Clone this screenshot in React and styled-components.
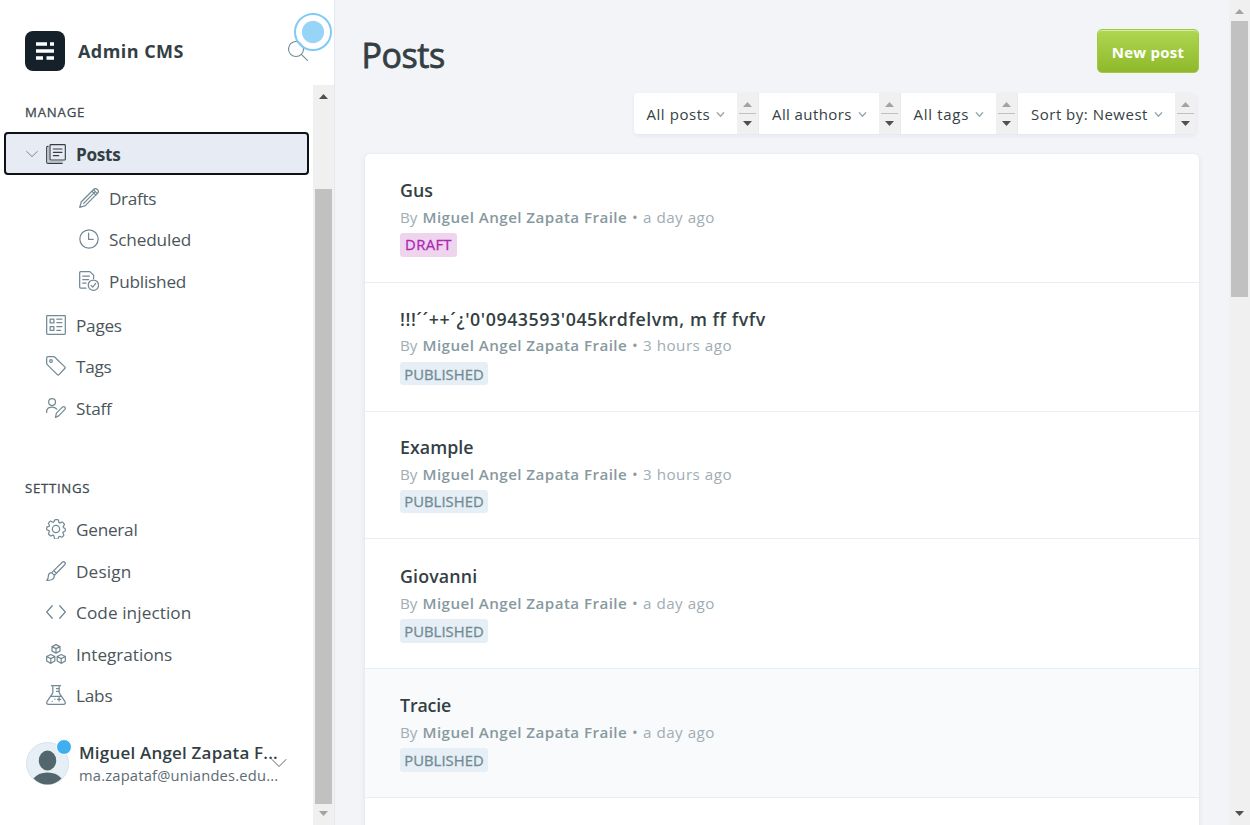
import React from 'react';
import styled, { createGlobalStyle, css } from 'styled-components';

const Global = createGlobalStyle`
  * { box-sizing: border-box; }
  html, body { margin: 0; padding: 0; height: 100%; overflow: hidden; }
  body { font-family: "Open Sans", "Noto Sans", sans-serif; color: #394047; background: #f2f4f8; }
  h1, h2, h3, p { margin: 0; font-weight: inherit; }
`;

const Page = styled.div`
  display: grid;
  grid-template-columns: 335px 1fr 21px;
  width: 1250px;
  height: 825px;
  overflow: hidden;
`;

const Sidebar = styled.aside`
  position: relative;
  display: flex;
  flex-direction: column;
  background: #fff;
  border-right: 1px solid #e5e9ef;
  min-width: 0;
`;

const Brand = styled.header`
  display: flex;
  align-items: center;
  height: 85px;
  padding: 17px 26px 0 25px;
  flex: none;
`;

const BrandName = styled.span`
  flex: 1;
  margin-left: 13px;
  font-size: 18px;
  font-weight: 700;
  line-height: 24px;
  letter-spacing: 0.45px;
  color: #343f44;
`;

const Pulse = styled.div`
  position: absolute;
  left: 294px;
  top: 13px;
  width: 38px;
  height: 38px;
  border-radius: 50%;
  border: 2px solid #80cbf6;
  background: radial-gradient(circle, #98d3f8 0 10.6px, rgba(255, 255, 255, 0.6) 11.6px);
`;

const Glyph = styled.svg`
  display: block;
  flex: none;
  width: ${(p) => p.$size || 20}px;
  height: ${(p) => p.$size || 20}px;
  fill: none;
  stroke: ${(p) => p.$color || '#738a94'};
  stroke-width: ${(p) => p.$weight || 1.5};
  stroke-linecap: round;
  stroke-linejoin: round;
`;

const SideBody = styled.div`
  display: flex;
  flex: 1;
  min-height: 0;
`;

const Nav = styled.nav`
  display: flex;
  flex-direction: column;
  width: 313px;
  flex: none;
`;

const Heading = styled.h3`
  height: 20px;
  margin: ${(p) => p.$top}px 0 0 25px;
  font-size: 13.2px;
  line-height: 20px;
  font-weight: 400;
  -webkit-text-stroke: 0.3px currentColor;
  letter-spacing: ${(p) => p.$ls}px;
  color: #404b51;
`;

const Item = styled.a`
  display: flex;
  align-items: center;
  height: 40px;
  padding-left: ${(p) => (p.$sub ? 79 : 46)}px;
  margin-top: ${(p) => p.$top || 0}px;
  font-size: 17.2px;
  font-weight: ${(p) => (p.$active ? 700 : 400)};
  color: ${(p) => (p.$active ? '#343f44' : '#4b565b')};
  letter-spacing: ${(p) => p.$ls || 0}px;
  ${(p) =>
    p.$active &&
    css`
      margin: 10px 4px 0 4px;
      height: 43px;
      padding: 0 0 0 20px;
      border: 2px solid #101114;
      border-radius: 4px;
      background: #e6ebf4;
    `}
`;

const Label = styled.span`
  margin-left: 10px;
  padding-top: 2px;
  line-height: 24px;
  white-space: nowrap;
`;

const Caret = styled(Glyph)`
  width: 12px;
  height: 8px;
  margin-right: 8px;
`;

const User = styled.div`
  display: flex;
  align-items: flex-start;
  margin: 27px 0 0 26px;
  height: 44px;
`;

const Avatar = styled.div`
  position: relative;
  width: 43px;
  height: 43px;
  flex: none;
`;

const Online = styled.i`
  position: absolute;
  left: 30px;
  top: -3px;
  width: 16px;
  height: 16px;
  border-radius: 50%;
  background: #3eb0ef;
  border: 1px solid #fff;
`;

const UserText = styled.div`
  margin: -1px 0 0 10px;
  width: 200px;
  white-space: nowrap;
`;

const UserName = styled.div`
  margin-bottom: 1px;
  font-size: 17px;
  line-height: 23px;
  font-weight: 600;
  letter-spacing: ${(p) => p.$ls}px;
  color: #343f44;
`;

const UserMail = styled.div`
  font-size: 14.7px;
  line-height: 21px;
  letter-spacing: ${(p) => p.$ls}px;
  color: #5d6b72;
`;

const UserCaret = styled(Glyph)`
  width: 18px;
  height: 10px;
  margin: 16px 0 0 -9px;
`;

const Bar = styled.div`
  display: flex;
  flex-direction: column;
  align-items: center;
  width: 21px;
  flex: none;
  background: #f0f0f0;
`;

const BarEnd = styled.div`
  display: flex;
  align-items: center;
  justify-content: center;
  flex: none;
  height: ${(p) => p.$h}px;
  padding-top: ${(p) => p.$pad || 0}px;
`;

const BarThumb = styled.div`
  width: 17px;
  height: ${(p) => p.$h}px;
  margin-top: ${(p) => p.$top || 0}px;
  background: #c1c1c1;
`;

const Spacer = styled.div`
  flex: 1;
`;

const Arrow = styled.i`
  display: block;
  flex: none;
  width: 9px;
  height: 5px;
  background: ${(p) => (p.$muted ? '#a3a3a3' : '#505050')};
  clip-path: ${(p) => (p.$down ? 'polygon(0 0, 100% 0, 50% 100%)' : 'polygon(50% 0, 100% 100%, 0 100%)')};
`;

const Main = styled.main`
  display: flex;
  flex-direction: column;
  padding: 29px 30px 0 30px;
  min-width: 0;
  overflow: hidden;
`;

const TitleRow = styled.div`
  display: flex;
  justify-content: space-between;
  height: 64px;
  flex: none;
`;

const Title = styled.h1`
  margin: 4px 0 0 -3.5px;
  font-size: 34px;
  line-height: 44px;
  font-weight: 400;
  -webkit-text-stroke: 0.8px currentColor;
  letter-spacing: ${(p) => p.$ls}px;
  color: #343f44;
`;

const NewPost = styled.button`
  width: 102px;
  height: 44px;
  padding: 2px 0 0 0;
  border: 1px solid #9fcb3c;
  border-radius: 5px;
  box-shadow: inset 0 1px 0 #d3ebaa;
  background: linear-gradient(#afd751, #8fb92b);
  font: 700 15px/20px "Open Sans", sans-serif;
  letter-spacing: ${(p) => p.$ls}px;
  color: #fff;
`;

const Filters = styled.div`
  display: flex;
  align-self: flex-end;
  height: 41px;
  flex: none;
  margin-right: 3px;
  border-radius: 4px;
  overflow: hidden;
  background: #e9eaee;
  gap: 1px;
  box-shadow: 0 0 1px rgba(0, 0, 0, 0.05), 0 2px 4px rgba(30, 40, 80, 0.06);
`;

const Filter = styled.div`
  display: flex;
  width: ${(p) => p.$w}px;
  background: #fff;
`;

const FilterText = styled.div`
  display: flex;
  align-items: center;
  justify-content: space-between;
  flex: 1;
  padding: 0 12px 0 ${(p) => p.$pad}px;
  font-size: 15px;
  white-space: nowrap;
  letter-spacing: ${(p) => p.$ls}px;
  color: #343f44;
`;

const FilterCaret = styled(Glyph)`
  width: 9px;
  height: 9px;
  margin-top: 2px;
`;

const Spinner = styled.div`
  display: flex;
  flex-direction: column;
  align-items: center;
  width: 21px;
  padding-top: 9px;
  background: #f0f0f0;
`;

const SpinLine = styled.div`
  width: 17px;
  height: 1px;
  margin: 6px 0 7px;
  background: #c1c1c1;
`;

const List = styled.section`
  flex: none;
  margin-top: 20px;
  border-radius: 5px;
  background: #fff;
  box-shadow: 0 0 1px rgba(0, 0, 0, 0.1), 0 2px 6px rgba(30, 40, 80, 0.08);
`;

const Row = styled.article`
  height: ${(p) => p.$h}px;
  padding: ${(p) => p.$top}px 0 0 35px;
  border-bottom: 1px solid #e5eff5;
  background: ${(p) => (p.$hover ? '#f9fafc' : 'transparent')};
`;

const PostTitle = styled.h3`
  font-size: 17.8px;
  line-height: 26px;
  font-weight: 600;
  letter-spacing: ${(p) => p.$ls}px;
  color: #343f44;
`;

const Meta = styled.p`
  display: flex;
  height: 28px;
  font-size: 15.2px;
  line-height: ${(p) => (p.$raised ? 26 : 28)}px;
  white-space: pre;
  color: #a0adb4;
`;

const By = styled.span`
  width: 22.5px;
`;

const Author = styled.span`
  width: 209.5px;
  font-weight: 600;
  letter-spacing: 0.43px;
  color: #87999f;
`;

const Dot = styled.span`
  width: 11px;
  color: #8a9ba3;
`;

const When = styled.span`
  letter-spacing: 0.5px;
`;

const Badge = styled.span`
  display: flex;
  align-items: center;
  justify-content: center;
  width: ${(p) => (p.$draft ? 57 : 88)}px;
  height: ${(p) => p.$h}px;
  padding-bottom: ${(p) => p.$lift || 0}px;
  margin-top: 2px;
  border-radius: 3px;
  font-size: 14.8px;
  line-height: 22px;
  font-weight: 400;
  -webkit-text-stroke: 0.3px currentColor;
  letter-spacing: ${(p) => (p.$draft ? 0.35 : 0.05)}px;
  color: ${(p) => (p.$draft ? '#ad26b4' : '#738a94')};
  background: ${(p) => (p.$draft ? '#efd4ee' : '#e5eff5')};
`;

const icons = {
  posts: (
    <>
      <rect x="4.8" y="0.8" width="18.400" height="18.400" rx="1" />
      <path d="M2.500 2.800H2Q.8 2.800 .8 4.200V21.500Q.8 23.200 2.500 23.200H19.500" />
      <path d="M8.800 6h10.400M8.800 10h10.400M8.800 14h6.400" />
      <path strokeOpacity="0.25" d="M2.900 3.500V19.500Q2.900 21.200 4.500 21.200H20" />
    </>
  ),
  drafts: (
    <path d="M2.8 16.5 17.8 1.5Q19.5 0 21.3 1.2L22.8 2.7Q24 4.5 22.5 6.2L7.5 21.2 .8 23.2ZM5.600 18.400 18.700 5.300M15.5 3.8 20.2 8.5M17.3 2 22 6.8" />
  ),
  scheduled: (
    <>
      <circle cx="12" cy="12" r="11" />
      <path d="M11.5 5v7.5H17" />
    </>
  ),
  published: (
    <>
      <path d="M8.5 20.5H2Q.8 20.5 .8 19.3V2Q.8.8 2 .8H13L17.5 5V9M4.5 6h8M4.5 10.3h7M4.5 14.6h4" />
      <circle cx="17.3" cy="17" r="6.2" />
      <path d="m14.4 17.3 2 2 3.6-4.5" />
    </>
  ),
  pages: (
    <>
      <rect x="0.8" y="0.8" width="22.4" height="22.4" rx="1" />
      <path d="M5 5h4.500v4.500H5zM5 14h4.500v4.500H5zM13 5h6M13 9h6M13 14h6M13 18.400h4.500" />
    </>
  ),
  tags: (
    <>
      <path d="M.8 2.3Q.8.8 2.3.8H9Q10 .8 10.7 1.5L22.5 13Q23.5 14 22.5 15L15.6 22.3Q14.6 23.3 13.6 22.3L1.5 10.3Q.8 9.6.8 8.6Z" />
      <circle cx="6" cy="6" r="1.6" />
    </>
  ),
  staff: (
    <>
      <circle cx="7.3" cy="4.9" r="4.100" />
      <path d="M.8 17.500V15.500Q1.500 10.800 7.300 10.800 10.800 10.800 13 13.300M11.300 23.200l1.200-5 7.400-7.500q1.300-1 2.600.2 1.300 1.500.2 2.700l-7.500 7.800Z" />
    </>
  ),
  general: (
    <>
      <path d="m9.6 3.2.7-1.7Q11 .6 12.2.8H14q.8.2 1 1.2l.4 2q.4 1 1.4.6l2-.9q1-.3 1.5.4l1.5 1.8q.5.8 0 1.5l-1 1.5q-.6 1 .4 1.6l1.500.8q.6.4.5 1.300v1q0 .8-.6 1.100l-1.600.7q-1 .6-.5 1.600l.8 1.800q.2.700-.3 1.300l-1.300 1.400q-.6.400-1.400.100l-1.600-.7q-1-.2-1.400.6l-.8 1.800q-.4.800-1.200.800h-2q-.8 0-1.100-.8L9.500 20q-.5-1-1.500-.6l-1.800.8q-.8.300-1.500-.4L3.300 18.300q-.5-.6-.1-1.400l.8-1.600q.3-1-.6-1.400l-1.900-.7Q.8 13 .8 12.200v-1.600q0-.7.800-1.100l1.800-.7q1-.5.5-1.500l-.8-1.800q-.2-.7.3-1.200l1.300-1.400q.6-.4 1.300-.1l1.800.8q1.200.6 1.800-.4Z" />
      <circle cx="12" cy="12" r="4.4" />
    </>
  ),
  design: (
    <path d="M.8 23.2Q3 21 2.8 18.2 3.2 14 6.8 14L10 17.2Q10.3 21 6.5 22.5 4 23.3 .8 23.2ZM7 14 9.3 11.5 12.5 14.7 10 17.2M9.3 11.5 19.5 1.5Q21 .2 22.5 1.5 23.8 3 22.5 4.5L12.5 14.7" />
  ),
  code: <path d="m7.5 4.5-6.7 7.5 6.7 7.5M16.5 4.5l6.7 7.5-6.7 7.5" />,
  integrations: (
    <path d="m12 .8 4.8 2.4v5.3L12 10.9 7.2 8.5V3.2ZM7.2 3.2 12 5.6l4.8-2.4M12 5.6v5.3M5.8 12.6l4.8 2.4v5.4l-4.8 2.8L.8 20.4V15ZM.8 15l5 2.5 4.8-2.5M5.8 17.5v5.7M18.2 12.6l5 2.4v5.4l-5 2.8-4.8-2.8V15ZM13.4 15l4.8 2.5 5-2.5M18.2 17.5v5.7" />
  ),
  labs: (
    <>
      <path d="M6.5.8h11M8.2 1v8.5L1.2 20q-1.2 3 1.800 3.200h18q3-.2 1.800-3.200l-7-10.500V1M12.500 4.200h3M12.500 7.600h3M5.500 13.600h13" />
      <path d="M15.7 15.2v4M13.7 17.2h4M7.3 19.5h.2M10.5 17h.2" />
    </>
  ),
};

function Icon({ name, ...rest }) {
  return (
    <Glyph viewBox="0 0 24 24" {...rest}>
      {icons[name]}
    </Glyph>
  );
}

function NavItem({ icon, children, ...rest }) {
  return (
    <Item {...rest}>
      <Icon name={icon} />
      <Label>{children}</Label>
    </Item>
  );
}

const filters = [
  { text: 'All posts', w: 124, pad: 12.5, ls: 0.55 },
  { text: 'All authors', w: 141, pad: 13, ls: 0.4 },
  { text: 'All tags', w: 116, pad: 12.5, ls: 0.7 },
  { text: 'Sort by: Newest', w: 178, pad: 13, ls: 0.5 },
];

const posts = [
  { title: 'Gus', when: 'a day ago', draft: true, h: 129, top: 23, ls: 0, badge: 24, lift: 2 },
  { title: "!!!´´++´¿'0'0943593'045krdfelvm, m ff fvfv", when: '3 hours ago', h: 129, top: 23, ls: 0.56, badge: 23, raised: true },
  { title: 'Example', when: '3 hours ago', h: 127, top: 22, ls: 0.05, badge: 23, lift: 2 },
  { title: 'Giovanni', when: 'a day ago', h: 130, top: 24, ls: 0.15, badge: 24 },
  { title: 'Tracie', when: 'a day ago', h: 129, top: 23, ls: -0.15, badge: 24, hover: true },
];

export default function App() {
  return (
    <>
      <Global />
      <Page>
        <Sidebar>
          <Brand>
            <svg width="40" height="40" viewBox="0 0 40 40">
              <rect width="40" height="40" rx="8" fill="#15212a" />
              <path fill="#fff" d="M11 11.3h11v3.4H11zM25 11.3h4v3.4h-4zM11 18.3h18v3.4H11zM11 25.3h7v3.4h-7zM21.5 25.3H29v3.4h-7.500z" />
            </svg>
            <BrandName>Admin CMS</BrandName>
            <Glyph viewBox="0 0 24 24" $weight={1.3}>
              <circle cx="9.6" cy="9.6" r="9" />
              <path d="m16 16 7.300 7.300" />
            </Glyph>
          </Brand>
          <SideBody>
            <Nav>
              <Heading $top={17} $ls={0.8}>MANAGE</Heading>
              <Item $active $ls={-0.3}>
                <Caret viewBox="0 0 12 8" $weight={1}>
                  <path d="m.6 1.400 5.400 5.200 5.400-5.200" />
                </Caret>
                <Icon name="posts" $color="#343f44" $weight={1.35} />
                <Label>Posts</Label>
              </Item>
              <NavItem icon="drafts" $sub $top={3} $ls={-0.35}>Drafts</NavItem>
              <NavItem icon="scheduled" $sub $top={1} $ls={-0.15}>Scheduled</NavItem>
              <NavItem icon="published" $sub $top={2} $ls={-0.2}>Published</NavItem>
              <NavItem icon="pages" $top={4} $ls={-0.25}>Pages</NavItem>
              <NavItem icon="tags" $top={1} $ls={-0.3}>Tags</NavItem>
              <NavItem icon="staff" $top={2} $ls={-0.2}>Staff</NavItem>
              <Heading $top={50} $ls={0.7}>SETTINGS</Heading>
              <NavItem icon="general" $top={11} $ls={-0.25}>General</NavItem>
              <NavItem icon="design" $top={2} $ls={0.15}>Design</NavItem>
              <NavItem icon="code" $top={1} $ls={0.08}>Code injection</NavItem>
              <NavItem icon="integrations" $top={2} $ls={-0.03}>Integrations</NavItem>
              <NavItem icon="labs" $top={1} $ls={-0.2}>Labs</NavItem>
              <User>
                <Avatar>
                  <svg width="43" height="43" viewBox="0 0 43 43">
                    <circle cx="21.500" cy="21.500" r="21" fill="#e5eff5" stroke="#d9e1ea" />
                    <ellipse cx="21.500" cy="18.500" rx="8.700" ry="10" fill="#54666d" />
                    <path d="M7.500 36.500Q12 30.500 21.500 30.500T35.500 36.500Q29.500 42.500 21.500 42.500T7.500 36.500Z" fill="#54666d" />
                  </svg>
                  <Online />
                </Avatar>
                <UserText>
                  <UserName $ls={0.2}>Miguel Angel Zapata F...</UserName>
                  <UserMail $ls={0.2}>ma.zapataf@uniandes.edu...</UserMail>
                </UserText>
                <UserCaret viewBox="0 0 18 10" $color="#394047" $weight={0.8}>
                  <path d="m2 1.500 7 7 7-7" />
                </UserCaret>
              </User>
            </Nav>
            <Bar>
              <BarEnd $h={23}><Arrow /></BarEnd>
              <BarThumb $top={81} $h={615} />
              <BarEnd $h={19}><Arrow $down $muted /></BarEnd>
            </Bar>
          </SideBody>
          <Pulse />
        </Sidebar>
        <Main>
          <TitleRow>
            <Title $ls={-0.45}>Posts</Title>
            <NewPost $ls={0.25}>New post</NewPost>
          </TitleRow>
          <Filters>
            {filters.map((f) => (
              <Filter key={f.text} $w={f.w}>
                <FilterText $ls={f.ls} $pad={f.pad}>
                  {f.text}
                  <FilterCaret viewBox="0 0 10 10" $weight={1.6} $color="#9baab2">
                    <path d="m1.500 3 3.500 4 3.500-4" />
                  </FilterCaret>
                </FilterText>
                <Spinner>
                  <Arrow $muted />
                  <SpinLine />
                  <Arrow $down />
                </Spinner>
              </Filter>
            ))}
          </Filters>
          <List>
            {posts.map((p) => (
              <Row key={p.title} $h={p.h} $top={p.top} $hover={p.hover}>
                <PostTitle $ls={p.ls}>{p.title}</PostTitle>
                <Meta $raised={p.raised}>
                  <By>By</By>
                  <Author>Miguel Angel Zapata Fraile</Author>
                  <Dot>•</Dot>
                  <When>{p.when}</When>
                </Meta>
                <Badge $draft={p.draft} $h={p.badge} $lift={p.lift}>{p.draft ? 'DRAFT' : 'PUBLISHED'}</Badge>
              </Row>
            ))}
            <Row $h={60} $top={0} />
          </List>
        </Main>
        <Bar>
          <BarEnd $h={21} $pad={2}><Arrow $muted /></BarEnd>
          <BarThumb $h={276} />
          <Spacer />
          <BarEnd $h={23}><Arrow $down /></BarEnd>
        </Bar>
      </Page>
    </>
  );
}
